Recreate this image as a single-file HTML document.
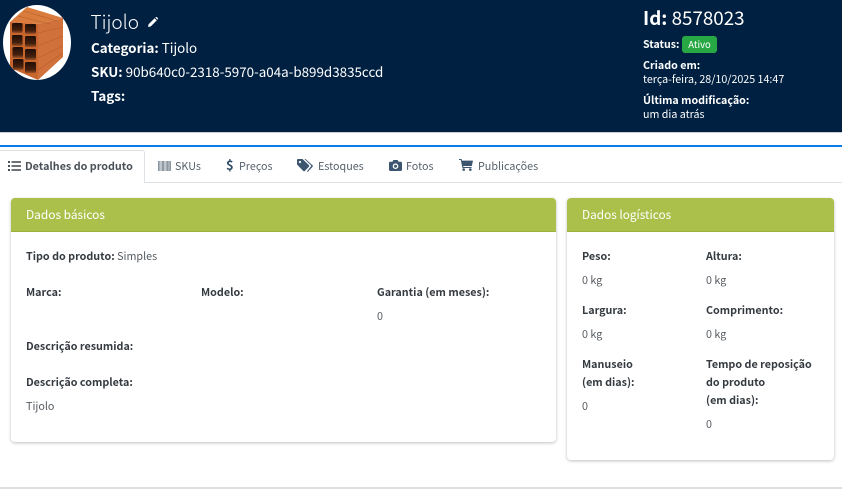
<!DOCTYPE html>
<html lang="pt-BR"><head><meta charset="utf-8"><title>Tijolo</title>
<style>
*{box-sizing:border-box}
html,body{margin:0;padding:0;background:#fff}
body{position:relative;width:842px;height:502px;overflow:hidden;font-family:"Noto Sans CJK JP","Liberation Sans",sans-serif;font-size:10.75px;color:#555b61}
.t{position:absolute;white-space:nowrap;line-height:18px}
b{font-weight:700;color:#343a40}
.w,.w b{color:#fff}
.card{position:absolute;background:#fff;border-radius:4px;box-shadow:0 1px 3px rgba(0,0,0,.25)}
.head{position:absolute;left:0;top:0;right:0;height:34px;background:#abc04a;border-bottom:1px solid #9cb03f;border-radius:4px 4px 0 0}
.tab{color:#56616c}
</style></head><body>
<div style="position:absolute;left:0;top:0;width:842px;height:132px;background:#002041"></div>
<div style="position:absolute;left:0;top:132px;width:842px;height:1px;background:#c9ced3"></div>
<svg style="position:absolute;left:0;top:0" width="90" height="90" viewBox="0 0 90 90">
<defs>
<clipPath id="c"><ellipse cx="37" cy="42.5" rx="34" ry="37.5"/></clipPath>
<linearGradient id="h" x1="0" y1="0" x2="0" y2="1"><stop offset="0" stop-color="#1f0e06"/><stop offset=".7" stop-color="#45200e"/><stop offset="1" stop-color="#9c5226"/></linearGradient>
</defs>
<ellipse cx="37" cy="42.5" rx="34" ry="37.5" fill="#fff"/>
<g clip-path="url(#c)">
<path d="M10 22 L27 7 L63 18 L38 24Z" fill="#d97c3e"/>
<path d="M38 24 L63 18 V57 L38 80Z" fill="#d0703a"/>
<path d="M10 22 L38 24 V80 L13 69 L10 66Z" fill="#c8652c"/>
<g stroke="#b85f2b" stroke-width=".6" fill="none"><path d="M38 33 L63 27M38 46 L63 36M38 58 L63 46M38 70 L63 53"/><path d="M18 16 L50 24M24 11 L57 21"/></g>
<g fill="url(#h)"><rect x="12" y="23" width="10.5" height="10" rx="1.5"/><rect x="25" y="24" width="11" height="10" rx="1.5"/><rect x="12" y="35" width="10.5" height="11" rx="1.5"/><rect x="25" y="36" width="11" height="11" rx="1.5"/><rect x="12.5" y="47" width="10.5" height="11" rx="1.5"/><rect x="25" y="49" width="11" height="11" rx="1.5"/><rect x="13" y="59" width="10.5" height="11" rx="1.5"/><rect x="25" y="62" width="11" height="11" rx="1.5"/></g>
</g>
</svg>
<div class="t w" style="left:90.5px;top:9px;font-size:19px;line-height:26px;font-weight:300">Tijolo</div>
<svg style="position:absolute;left:148px;top:17px" width="10" height="10" viewBox="0 0 10 10"><path d="M0 10 L.6 7.2 L6.6 1.2 L8.8 3.4 L2.8 9.4Z M7.3.5 L8 0 Q8.5-.2 9 .2 L9.8 1 Q10.2 1.5 9.8 2 L9.5 2.7Z" fill="#fff"/></svg>
<div class="t w" style="left:91px;top:38px;font-size:13.4px"><b>Categoria:</b> Tijolo</div>
<div class="t w" style="left:91px;top:62px;font-size:13.4px"><b>SKU:</b> 90b640c0-2318-5970-a04a-b899d3835ccd</div>
<div class="t w" style="left:91px;top:86px;font-size:13.4px"><b>Tags:</b></div>
<div class="t w" style="left:643px;top:6px;font-size:18.8px;line-height:24px"><b>Id:</b> 8578023</div>
<div class="t w" style="left:643px;top:36px;font-size:10.6px"><b>Status:</b></div>
<div style="position:absolute;left:682px;top:36px;width:35px;height:17px;background:#28a745;border-radius:3px;color:#fff;font-size:9.5px;line-height:16px;text-align:center">Ativo</div>
<div class="t w" style="left:643px;top:57px;font-size:10.7px"><b>Criado em:</b></div>
<div class="t w" style="left:643px;top:71px;font-size:10.7px">terça-feira, 28/10/2025 14:47</div>
<div class="t w" style="left:643px;top:92px;font-size:10.7px"><b>Última modificação:</b></div>
<div class="t w" style="left:643px;top:106px;font-size:10.7px">um dia atrás</div>

<div style="position:absolute;left:0;top:145px;width:842px;height:2px;background:#0a7bea"></div>
<div style="position:absolute;left:0;top:182px;width:842px;height:1px;background:#dee2e6"></div>
<div style="position:absolute;left:-2px;top:150px;width:147px;height:33px;background:#fff;border:1px solid #dee2e6;border-bottom:0;border-radius:3px 3px 0 0"></div>
<svg style="position:absolute;left:8px;top:161px" width="13" height="10" viewBox="0 0 13 10" fill="#495057"><rect x="0" y="0" width="2" height="2"/><rect x="0" y="4" width="2" height="2"/><rect x="0" y="8" width="2" height="2"/><rect x="3.5" y=".2" width="9.5" height="1.6"/><rect x="3.5" y="4.2" width="9.5" height="1.6"/><rect x="3.5" y="8.2" width="9.5" height="1.6"/></svg>
<div class="t" style="left:25px;top:158px;font-size:10.75px;font-weight:700;color:#495057">Detalhes do produto</div>
<svg style="position:absolute;left:158px;top:161px" width="13" height="10" viewBox="0 0 13 10" fill="#8d98a3"><rect x="0" width="13" height="10" opacity=".55"/><rect x="0" width="1.5" height="10"/><rect x="4" width="2" height="10"/><rect x="8.5" width="2" height="10"/><rect x="11.5" width="1.5" height="10"/></svg>
<div class="t tab" style="left:175px;top:158px;font-size:10.75px">SKUs</div>
<div class="t" style="left:226px;top:156px;font-size:13px;font-weight:700;color:#2f4a66">$</div>
<div class="t tab" style="left:239px;top:158px;font-size:10.75px">Preços</div>
<svg style="position:absolute;left:297px;top:159px" width="16" height="13" viewBox="0 0 16 13" fill="#3d5670"><path d="M0 1 Q0 0 1 0 H5.5 L12 6.3 Q12.6 7 12 7.6 L7.8 12 Q7 12.6 6.3 12 L0 5.5Z"/><path d="M7.5 0 H8.6 L15.6 6.4 Q16.2 7 15.6 7.7 L11 12.6 Q10.4 13 9.7 12.7 L14 7.2 Q14.4 6.8 14 6.4Z"/><circle cx="3" cy="3" r="1.1" fill="#fff"/></svg>
<div class="t tab" style="left:318px;top:158px;font-size:10.75px">Estoques</div>
<svg style="position:absolute;left:389px;top:160px" width="13" height="11" viewBox="0 0 13 11" fill="#3d5670"><path d="M1.2 1.8 H3.5 L4.3 0 H8.7 L9.5 1.8 H11.8 Q13 1.8 13 3 V9.8 Q13 11 11.8 11 H1.2 Q0 11 0 9.8 V3 Q0 1.8 1.2 1.8Z M6.5 3.4 A2.8 2.8 0 1 0 6.5 9 A2.8 2.8 0 1 0 6.5 3.4Z M6.5 4.7 A1.5 1.5 0 1 1 6.5 7.7 A1.5 1.5 0 1 1 6.5 4.7Z" fill-rule="evenodd"/></svg>
<div class="t tab" style="left:406px;top:158px;font-size:10.75px">Fotos</div>
<svg style="position:absolute;left:459px;top:159px" width="14" height="12" viewBox="0 0 14 12" fill="#3d5670"><path d="M0 0 H2.6 L3 1.6 H14 L12.8 7 H4.2 L4.4 8 H12.5 V9 H3.4 L1.8 1 H0Z"/><circle cx="4.7" cy="10.6" r="1.3"/><circle cx="11.3" cy="10.6" r="1.3"/></svg>
<div class="t tab" style="left:478px;top:158px;font-size:10.75px">Publicações</div>

<div class="card" style="left:11px;top:198px;width:545px;height:244px"><div class="head"></div></div>
<div class="card" style="left:567px;top:198px;width:267px;height:262px"><div class="head"></div></div>
<div class="t w" style="left:26px;top:206px;font-size:11.9px">Dados básicos</div>
<div class="t w" style="left:582px;top:206px;font-size:11.8px">Dados logísticos</div>

<div class="t" style="left:26px;top:248px"><b>Tipo do produto:</b> Simples</div>
<div class="t" style="left:26px;top:284px"><b>Marca:</b></div>
<div class="t" style="left:201px;top:284px"><b>Modelo:</b></div>
<div class="t" style="left:377px;top:284px"><b>Garantia (em meses):</b></div>
<div class="t" style="left:377px;top:308px">0</div>
<div class="t" style="left:26px;top:338px"><b>Descrição resumida:</b></div>
<div class="t" style="left:26px;top:374px"><b>Descrição completa:</b></div>
<div class="t" style="left:26px;top:398px">Tijolo</div>

<div class="t" style="left:582px;top:248px"><b>Peso:</b></div>
<div class="t" style="left:706px;top:248px"><b>Altura:</b></div>
<div class="t" style="left:582px;top:272px">0 kg</div>
<div class="t" style="left:706px;top:272px">0 kg</div>
<div class="t" style="left:582px;top:302px"><b>Largura:</b></div>
<div class="t" style="left:706px;top:302px"><b>Comprimento:</b></div>
<div class="t" style="left:582px;top:326px">0 kg</div>
<div class="t" style="left:706px;top:326px">0 kg</div>
<div class="t" style="left:582px;top:356px"><b>Manuseio</b></div>
<div class="t" style="left:582px;top:374px"><b>(em dias):</b></div>
<div class="t" style="left:582px;top:398px">0</div>
<div class="t" style="left:706px;top:356px"><b>Tempo de reposição</b></div>
<div class="t" style="left:706px;top:374px"><b>do produto</b></div>
<div class="t" style="left:706px;top:392px"><b>(em dias):</b></div>
<div class="t" style="left:706px;top:416px">0</div>
<div style="position:absolute;left:0;top:487px;width:842px;height:2px;background:#dcdfe2"></div>
</body></html>
